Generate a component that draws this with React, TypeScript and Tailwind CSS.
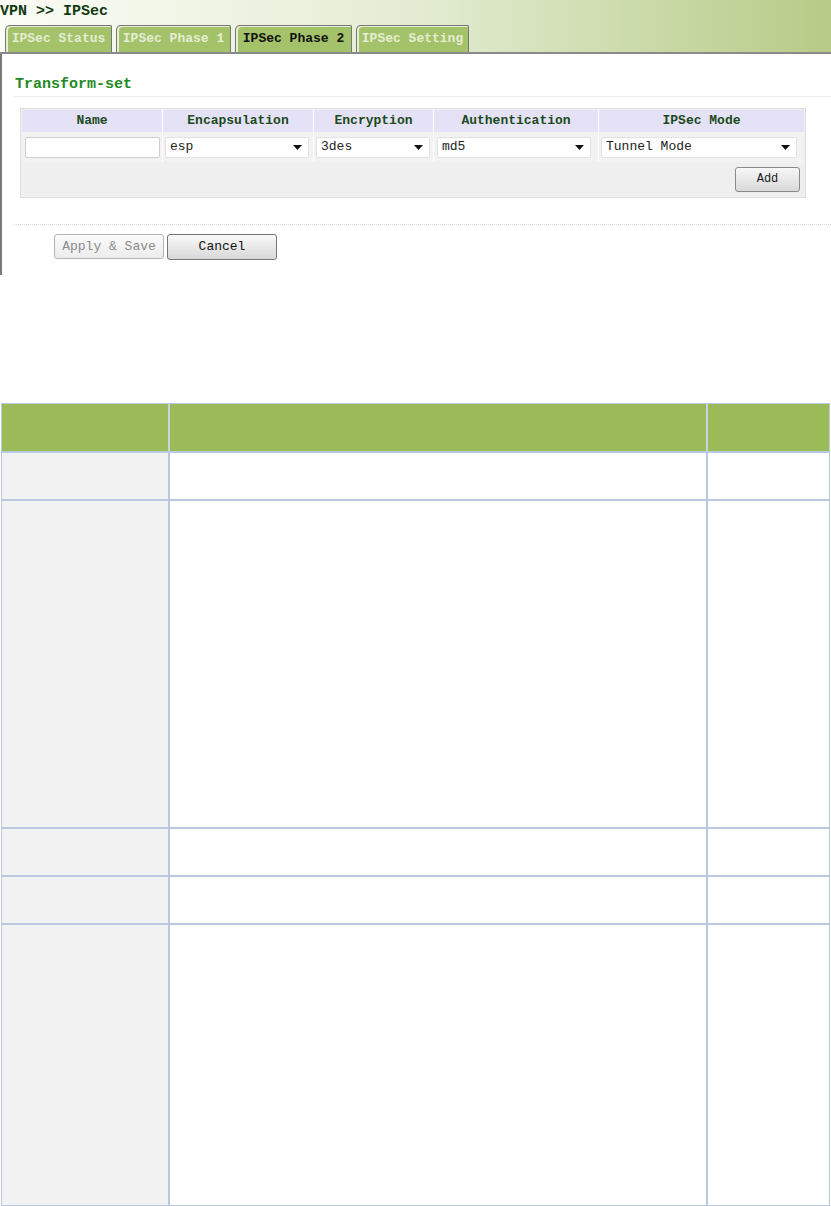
const tabs = [
  { label: "IPSec Status", w: "w-[107px]", active: false },
  { label: "IPSec Phase 1", w: "w-[115px]", active: false },
  { label: "IPSec Phase 2", w: "w-[117px]", active: true },
  { label: "IPSec Setting", w: "w-[113px]", active: false },
];

function Caret() {
  return (
    <svg width="9" height="5" viewBox="0 0 9 5" className="shrink-0">
      <path d="M0 0h9L4.5 5z" fill="#111" />
    </svg>
  );
}

function FakeSelect({ value, className }: { value: string; className: string }) {
  return (
    <div
      className={`flex h-[21px] items-center justify-between rounded-[2px] border border-[#e2e2e2] bg-white pl-[4px] pr-[6px] text-[13px] text-[#222] ${className}`}
    >
      <span>{value}</span>
      <Caret />
    </div>
  );
}

const rows = [48, 328, 48, 48, 282];

export default function App() {
  return (
    <div className="h-[1206px] w-[831px] bg-white font-['Liberation_Mono',monospace]">
      {/* header strip with breadcrumb and tabs */}
      <div className="h-[54px] border-b-2 border-[#8a8a8a] bg-[linear-gradient(to_right,#fbfcf6_0%,#e3ecd2_50%,#b7cb87_100%)]">
        <div className="pt-[3px] text-[15px] font-bold leading-[18px] text-[#123a12]">
          VPN &gt;&gt; IPSec
        </div>
        <div className="mt-[4px] flex gap-[4px] pl-[5px]">
          {tabs.map((t) => (
            <div
              key={t.label}
              className={`flex h-[27px] items-center justify-center rounded-tl-[5px] rounded-tr-[2px] border border-b-0 border-[#777] bg-[#a3c26a] shadow-[inset_2px_1px_0_#e6eed6] ${t.w}`}
            >
              <span
                className={`text-[13px] font-bold ${t.active ? "text-[#111]" : "text-[#e4edd2]"}`}
              >
                {t.label}
              </span>
            </div>
          ))}
        </div>
      </div>

      {/* panel */}
      <div className="h-[221px] border-l-2 border-[#7a7a7a] pl-[12px]">
        <div className="border-b border-[#ececec] pb-[2px] pl-[1px] pt-[22px] text-[15px] font-bold leading-[18px] text-[#1f8a1f]">
          Transform-set
        </div>

        <div className="ml-[6px] mt-[11px] w-[786px] border border-[#dedede] bg-[#f0f0f0] p-[1px]">
          <div className="grid grid-cols-[140px_150px_119px_164px_1fr] gap-x-[1px] bg-white">
            {["Name", "Encapsulation", "Encryption", "Authentication", "IPSec Mode"].map((h) => (
              <div
                key={h}
                className="flex h-[22px] items-center justify-center bg-[#e5e2f7] text-[13px] font-bold text-[#1c4a1c]"
              >
                {h}
              </div>
            ))}
            <div className="flex h-[30px] items-center bg-[#f2f2f2] pl-[3px]">
              <div className="h-[21px] w-[135px] rounded-[2px] border border-[#cfcfcf] bg-white" />
            </div>
            <div className="flex h-[30px] items-center bg-[#f2f2f2] pl-[2px]">
              <FakeSelect value="esp" className="w-[144px]" />
            </div>
            <div className="flex h-[30px] items-center bg-[#f2f2f2] pl-[2px]">
              <FakeSelect value="3des" className="w-[114px]" />
            </div>
            <div className="flex h-[30px] items-center bg-[#f2f2f2] pl-[3px]">
              <FakeSelect value="md5" className="w-[154px]" />
            </div>
            <div className="flex h-[30px] items-center bg-[#f2f2f2] pl-[2px]">
              <FakeSelect value="Tunnel Mode" className="w-[196px]" />
            </div>
          </div>
          <div className="flex h-[34px] items-center justify-end bg-[#efefef] pr-[4px]">
            <button className="h-[25px] w-[65px] rounded-[3px] border border-[#8a8a8a] bg-[linear-gradient(#f7f7f7,#d9d9d9)] text-[12px] text-[#222]">
              Add
            </button>
          </div>
        </div>

        <div className="mt-[26px] border-t border-dotted border-[#d8d8d8]" />

        <div className="ml-[40px] mt-[9px] flex gap-[3px]">
          <button className="h-[25px] w-[110px] rounded-[3px] border border-[#b4b4b4] bg-[linear-gradient(#fbfbfb,#ececec)] text-[13px] text-[#8c8c8c]">
            Apply &amp; Save
          </button>
          <button className="h-[26px] w-[110px] rounded-[3px] border border-[#777] bg-[linear-gradient(#f9f9f9,#d8d8d8)] text-[13px] text-[#111]">
            Cancel
          </button>
        </div>
      </div>

      {/* parameter table */}
      <div className="ml-[1px] mt-[128px] w-[829px] border border-[#b9c9df]">
        <div className="grid h-[47px] grid-cols-[168px_538px_1fr] bg-[#9bbb59]">
          <div className="border-r-2 border-[#c5d3e6]" />
          <div className="border-r-2 border-[#c5d3e6]" />
          <div />
        </div>
        {rows.map((h, i) => (
          <div
            key={i}
            className="grid grid-cols-[168px_538px_1fr] border-t-2 border-[#b9c9df]"
            style={{ height: h }}
          >
            <div className="border-r-2 border-[#b9c9df] bg-[#f2f2f2]" />
            <div className="border-r-2 border-[#b9c9df] bg-white" />
            <div className="bg-white" />
          </div>
        ))}
      </div>
    </div>
  );
}
